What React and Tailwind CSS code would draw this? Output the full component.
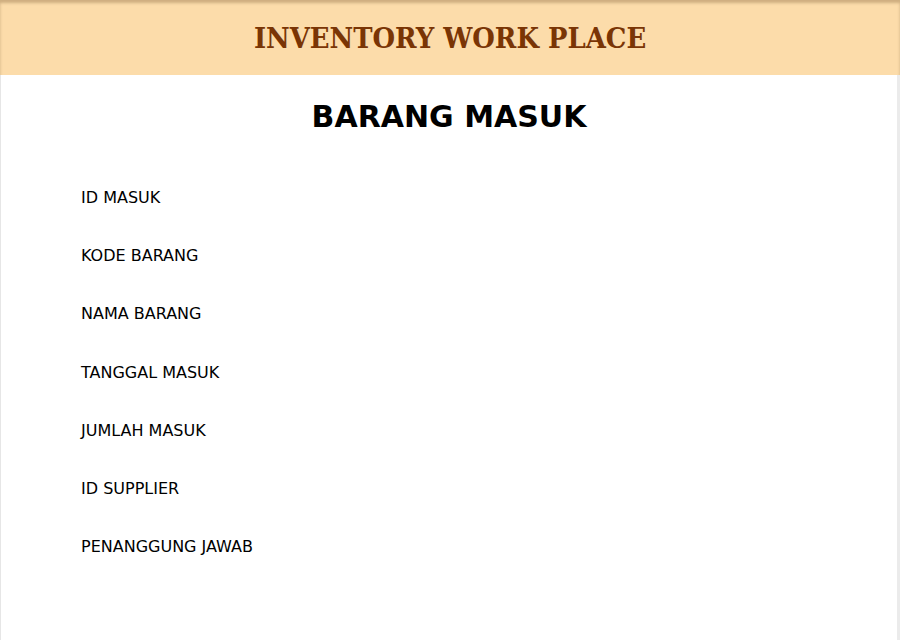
import React from 'react';

const fields = [
  'ID MASUK',
  'KODE BARANG',
  'NAMA BARANG',
  'TANGGAL MASUK',
  'JUMLAH MASUK',
  'ID SUPPLIER',
  'PENANGGUNG JAWAB',
];

const App = () => {
  return (
    <div className="h-[640px] flex flex-col bg-white overflow-hidden" style={{ fontFamily: '"DejaVu Sans", Verdana, sans-serif' }}>
      <header className="h-[75px] shrink-0 bg-[#fcdcaa] shadow-[inset_0_3px_3px_rgba(120,90,50,0.35)] flex items-center justify-center">
        <h1
          className="text-[28.8px] font-bold leading-none text-[#7a3505] pt-[1px]"
          style={{ fontFamily: '"DejaVu Serif Condensed", "DejaVu Serif", serif', fontStretch: 'condensed' }}
        >
          INVENTORY WORK PLACE
        </h1>
      </header>

      <main className="flex-1 border-l border-[#e6e6e6] border-r-[3px] border-r-[#ebebeb]">
        <h2 className="text-[30px] font-bold text-black text-center leading-none mt-[27px] mb-[56px]">
          BARANG MASUK
        </h2>

        <div className="pl-[80px]">
          {fields.map((label) => (
            <div key={label} className="h-[58.2px] text-[16px] text-black leading-[20px]">
              {label}
            </div>
          ))}
        </div>
      </main>
    </div>
  );
};

export default App;
